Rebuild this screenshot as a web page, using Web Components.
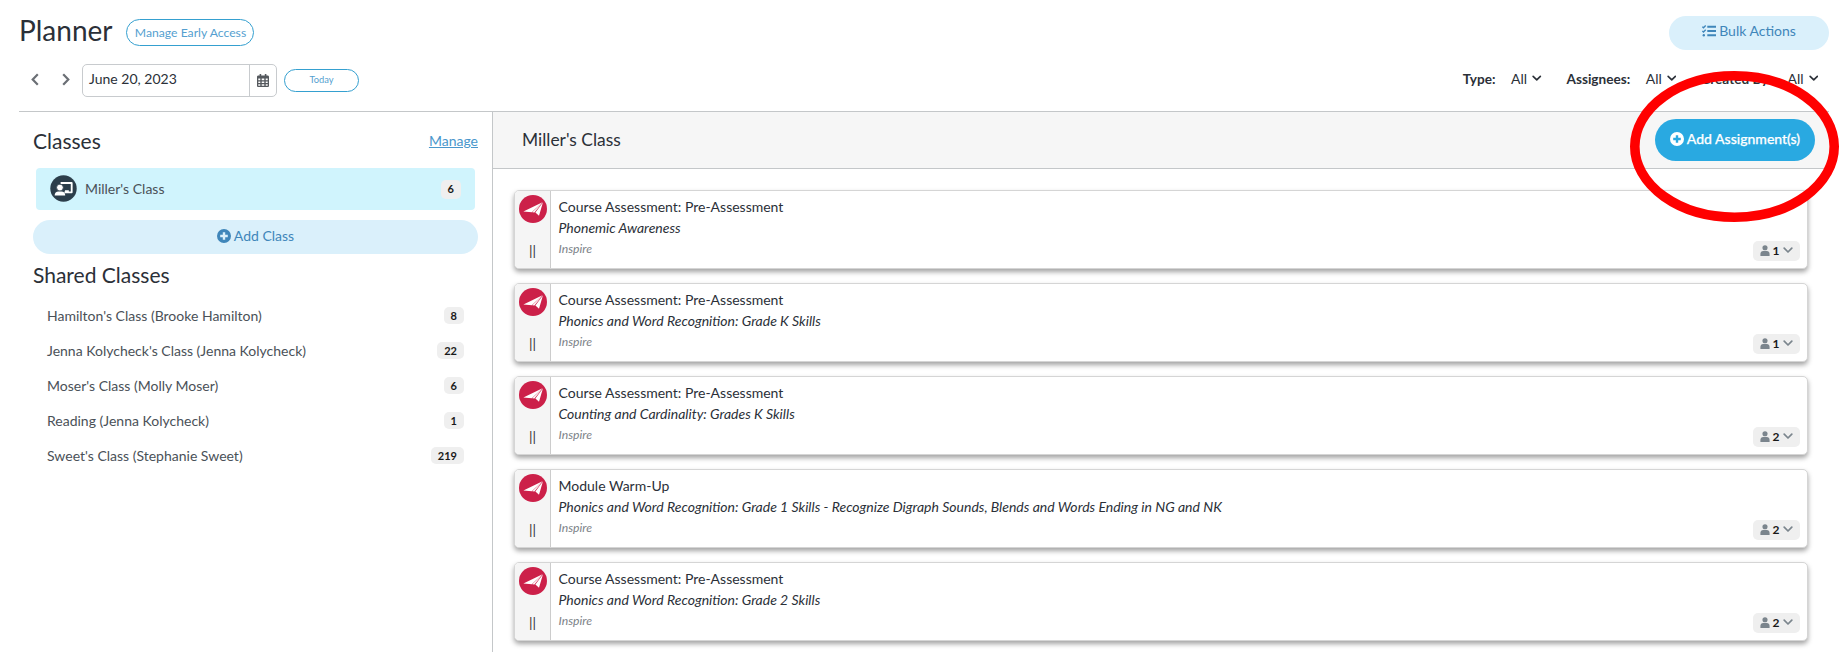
<!DOCTYPE html>
<html lang="en">
<head>
<meta charset="utf-8">
<title>Planner</title>
<style>
    html, body {
        margin: 0;
        height: 652px;
        overflow: hidden;
        background: #fff;
        font-family: Lato, "Liberation Sans", sans-serif;
        color: #2b3038;
    }
</style>
</head>
<body>
<planner-app></planner-app>

<script>
(() => {

    const BASE = `
        h1, h2, h3, div, header {
            box-sizing: border-box;
            padding: 0;
            margin: 0;
        }
    `

    // Attach an open shadow root filled from a template
    function render(host, html){
        let root = host.attachShadow({mode: 'open'})
        let template = document.createElement("template")
        template.innerHTML = html
        root.appendChild(template.content.cloneNode(true))
        return root
    }

    const ICONS = {
        left: `<svg viewBox="0 0 8 13"><path d="M6.8 1.2 1.7 6.5l5.1 5.3" fill="none" stroke="currentColor" stroke-width="2.2"/></svg>`,
        right: `<svg viewBox="0 0 8 13"><path d="M1.2 1.2l5.1 5.3-5.1 5.3" fill="none" stroke="currentColor" stroke-width="2.2"/></svg>`,
        down: `<svg viewBox="0 0 10 7"><path d="M1.2 1.2 5 5l3.8-3.8" fill="none" stroke="currentColor" stroke-width="1.7" stroke-linecap="round" stroke-linejoin="round"/></svg>`,
        plus: `<svg viewBox="0 0 14 14"><path fill="currentColor" fill-rule="evenodd" d="M7 0a7 7 0 1 0 0 14A7 7 0 0 0 7 0zM5.8 3.2h2.4v2.6h2.6v2.4H8.2v2.6H5.8V8.2H3.2V5.8h2.6z"/></svg>`,
        tasks: `<svg viewBox="0 0 14 12"><g fill="none" stroke="currentColor"><path stroke-width="1.9" d="M5.3 1.8H14M5.3 6H14M5.3 10.2H14"/><path stroke-width="1.3" d="M.4 1.7l1.1 1.1L3.7.5M.4 5.9L1.5 7l2.2-2.3"/></g><circle cx="1.8" cy="10.2" r="1.2" fill="currentColor"/></svg>`,
        calendar: `<svg viewBox="0 0 12 13"><path fill="currentColor" fill-rule="evenodd" d="M2.6 0h1.6v1.5h3.6V0h1.6v1.5h1.2c.8 0 1.4.6 1.4 1.3v8.9c0 .7-.6 1.3-1.4 1.3H1.4C.6 13 0 12.4 0 11.7V2.8c0-.7.6-1.3 1.4-1.3h1.2zM1.3 4.6v1.7h2V4.600zm3.4 0v1.7h2.6V4.600zm4 0v1.7h2V4.600zM1.3 7.4v1.7h2V7.400zm3.4 0v1.7h2.6V7.400zm4 0v1.7h2V7.400zM1.3 10.2v1.5h2v-1.5zm3.4 0v1.5h2.6v-1.5zm4 0v1.5h2v-1.5z"/></svg>`,
        user: `<svg viewBox="0 0 10 12"><circle cx="5" cy="3" r="2.8" fill="currentColor"/><path fill="currentColor" d="M0 12V9.8C0 7.8 1.3 6.5 3 6.5h4c1.7 0 3 1.3 3 3.3V12z"/></svg>`,
        teacher: `<svg viewBox="0 0 28 28"><circle cx="14" cy="14" r="13.7" fill="#2c3e4b"/><path d="M11 8.3h11.5V18H15" fill="none" stroke="#fff" stroke-width="1.9" stroke-linejoin="round"/><path d="M15.500 18v-2.200h4V18z" fill="#fff"/><circle cx="10.3" cy="13" r="3.5" fill="#fff" stroke="#2c3e4b" stroke-width=".8"/><path fill="#fff" d="M4.800 21.300c0-2.600 1.700-4.200 3.900-4.200h3.200c2.200 0 3.900 1.600 3.900 4.200z"/></svg>`,
        plane: `<svg viewBox="0 0 28 28"><circle cx="14" cy="14" r="14" fill="#cc2049"/><path fill="#fff" d="M23.500 7.300 4.400 16.600l8.400.6z"/><path fill="#fff" d="M23.700 7.300 13.200 17.300l2.200.3z"/><path fill="#fff" d="M23.900 7.500 16.400 17.500l3.600 3.300z"/></svg>`
    }

    customElements.define("pl-icon", class extends HTMLElement {
        connectedCallback(){
            render(this, `
                <style>
                    :host { display: inline-flex; flex: none; }
                    svg { display: block; width: 100%; height: 100%; }
                </style>
                ${ICONS[this.getAttribute("name")]}
            `)
        }
    })

    customElements.define("pl-button", class extends HTMLElement {
        connectedCallback(){
            render(this, `
                <style>
                    :host {
                        display: flex;
                        align-items: center;
                        justify-content: center;
                        box-sizing: border-box;
                        gap: 3px;
                        border-radius: 30px;
                        white-space: nowrap;
                        font-size: 14px;
                        line-height: 18px;
                        background: #daf0fb;
                        color: #3f86ba;
                    }
                    :host([kind=outline]) {
                        background: #fff;
                        border: 1px solid #35a0d0;
                        color: #559fd0;
                    }
                    :host([kind=primary]) {
                        background: #29a9e1;
                        color: #fff;
                        font-weight: 500;
                        -webkit-text-stroke: .25px #fff;
                    }
                </style>
                <slot></slot>
            `)
        }
    })

    customElements.define("pl-badge", class extends HTMLElement {
        connectedCallback(){
            render(this, `
                <style>
                    :host {
                        display: inline-flex;
                        align-items: center;
                        justify-content: center;
                        box-sizing: border-box;
                        height: 17px;
                        padding: 0 7px 1px;
                        border-radius: 5px;
                        background: #efefef;
                        color: #1a1a1a;
                        font-size: 11px;
                        font-weight: 700;
                    }
                </style>
                <slot></slot>
            `)
        }
    })

    customElements.define("pl-filter", class extends HTMLElement {
        connectedCallback(){
            render(this, `
                <style>
                    :host { display: flex; align-items: center; font-size: 14px; line-height: 18px; white-space: nowrap; }
                    b { font-size: 13.6px; font-weight: 700; margin-right: 15.5px; }
                    pl-icon { width: 9.5px; height: 7px; margin-left: 5px; }
                </style>
                <b>${this.getAttribute("label")}</b><slot></slot><pl-icon name="down"></pl-icon>
            `)
        }
    })

    customElements.define("pl-toolbar", class extends HTMLElement {
        connectedCallback(){
            render(this, `
                <style>
                    ${BASE}
                    :host { display: block; box-sizing: border-box; height: 111px; padding: 16px 11px 0 19px; }
                    .top, .bottom, .date, .filters { display: flex; align-items: center; }
                    .top { height: 34px; }
                    h1 { font-size: 28px; line-height: 34px; font-weight: 400; margin: -6px 14px 0 0; }
                    .early { width: 128px; height: 27px; font-size: 12.2px; margin-top: -1px; }
                    .bulk { width: 160px; height: 34px; margin-left: auto; padding-bottom: 4px; }
                    .bulk pl-icon { width: 14px; height: 12px; }
                    .bottom { height: 33px; margin-top: 14px; }
                    .arrow { width: 8px; height: 13px; margin-top: -2px; color: #6b6f75; }
                    .prev { margin-left: 12px; }
                    .next { margin: -2px 12px 0 23px; }
                    .date { width: 195px; height: 33px; border: 1px solid #c8cbce; border-radius: 5px; font-size: 14px; }
                    .date span { flex: 1; padding: 0 0 4px 6px; }
                    .date div { display: flex; align-items: center; justify-content: center; width: 27px; height: 100%; border-left: 1px solid #c8cbce; }
                    .date pl-icon { width: 12px; height: 13px; color: #55595e; }
                    .today { width: 75px; height: 23px; margin-left: 7px; font-size: 9.3px; padding-bottom: 1px; }
                    .filters { margin-left: auto; gap: 25px; padding: 0 11px 4px 0; }
                </style>
                <div class="top">
                    <h1>Planner</h1>
                    <pl-button kind="outline" class="early">Manage Early Access</pl-button>
                    <pl-button class="bulk"><pl-icon name="tasks"></pl-icon>Bulk Actions</pl-button>
                </div>
                <div class="bottom">
                    <pl-icon name="left" class="arrow prev"></pl-icon>
                    <pl-icon name="right" class="arrow next"></pl-icon>
                    <div class="date">
                        <span>June 20, 2023</span>
                        <div><pl-icon name="calendar"></pl-icon></div>
                    </div>
                    <pl-button kind="outline" class="today">Today</pl-button>
                    <div class="filters">
                        <pl-filter label="Type:">All</pl-filter>
                        <pl-filter label="Assignees:">All</pl-filter>
                        <pl-filter label="Created By:">All</pl-filter>
                    </div>
                </div>
            `)
        }
    })

    customElements.define("class-row", class extends HTMLElement {
        connectedCallback(){
            render(this, `
                <style>
                    :host {
                        display: flex;
                        align-items: center;
                        justify-content: space-between;
                        box-sizing: border-box;
                        height: 35px;
                        padding: 0 14px;
                        font-size: 14px;
                        color: #4a5158;
                    }
                    :host([active]) {
                        height: 42px;
                        margin: 0 3px 10px;
                        background: #d0f4fd;
                        border-radius: 4px;
                    }
                    :host([active]) pl-badge { height: 19px; }
                    .name { display: flex; align-items: center; gap: 8px; padding-bottom: 1px; }
                    pl-icon { width: 27px; height: 27px; }
                </style>
                <div class="name">
                    ${this.hasAttribute("active") ? `<pl-icon name="teacher"></pl-icon>` : ""}
                    <slot></slot>
                </div>
                <pl-badge>${this.getAttribute("count")}</pl-badge>
            `)
        }
    })

    customElements.define("class-sidebar", class extends HTMLElement {
        connectedCallback(){
            render(this, `
                <style>
                    ${BASE}
                    :host { display: block; box-sizing: border-box; width: 473px; padding: 16px 14px 0 14px; }
                    header { display: flex; align-items: center; justify-content: space-between; height: 26px; margin-bottom: 14px; }
                    h2 { font-size: 21px; line-height: 26px; font-weight: 400; }
                    a { font-size: 14px; color: #4a97cc; text-decoration: underline; padding-bottom: 1px; }
                    .add { height: 34px; padding-bottom: 2px; margin-bottom: 8px; }
                    .add pl-icon { width: 14px; height: 14px; }
                    .shared { margin-bottom: 10px; }
                </style>
                <header><h2>Classes</h2><a>Manage</a></header>
                <class-row active count="6">Miller's Class</class-row>
                <pl-button class="add"><pl-icon name="plus"></pl-icon>Add Class</pl-button>
                <h2 class="shared">Shared Classes</h2>
                <class-row count="8">Hamilton's Class (Brooke Hamilton)</class-row>
                <class-row count="22">Jenna Kolycheck's Class (Jenna Kolycheck)</class-row>
                <class-row count="6">Moser's Class (Molly Moser)</class-row>
                <class-row count="1">Reading (Jenna Kolycheck)</class-row>
                <class-row count="219">Sweet's Class (Stephanie Sweet)</class-row>
            `)
        }
    })

    customElements.define("assignment-card", class extends HTMLElement {
        connectedCallback(){
            render(this, `
                <style>
                    ${BASE}
                    :host {
                        display: flex;
                        box-sizing: border-box;
                        height: 79px;
                        background: #fff;
                        border: 1px solid #d5d5d5;
                        border-radius: 5px;
                        box-shadow: 0 3px 5px rgba(0, 0, 0, .36);
                        overflow: hidden;
                    }
                    .side {
                        display: flex;
                        flex-direction: column;
                        align-items: center;
                        justify-content: space-between;
                        width: 36px;
                        padding: 4px 0 9px;
                        background: #f5f5f5;
                        border-right: 1px solid #ccc;
                    }
                    .side pl-icon { width: 28px; height: 28px; }
                    .grip { font-size: 14px; line-height: 17px; color: #333; }
                    .body { flex: 1; padding: 5px 0 0 7.5px; }
                    .title, .skill { font-size: 14px; line-height: 21px; }
                    .skill, .source { font-style: italic; }
                    .source { font-size: 12.2px; line-height: 21px; color: #7c8288; }
                    pl-badge { align-self: flex-end; width: 47px; height: 20px; margin: 0 7px 7px 0; font-size: 12px; padding: 0 0 1px; gap: 3px; }
                    .user { width: 10px; height: 11px; color: #7b858d; }
                    .down { width: 10px; height: 7px; color: #7b858d; margin-left: 1px; }
                </style>
                <div class="side">
                    <pl-icon name="plane"></pl-icon>
                    <span class="grip">||</span>
                </div>
                <div class="body">
                    <div class="title">${this.getAttribute("title-text")}</div>
                    <div class="skill"><slot></slot></div>
                    <div class="source">Inspire</div>
                </div>
                <pl-badge><pl-icon class="user" name="user"></pl-icon>${this.getAttribute("count")}<pl-icon class="down" name="down"></pl-icon></pl-badge>
            `)
        }
    })

    customElements.define("assignment-list", class extends HTMLElement {
        connectedCallback(){
            render(this, `
                <style>
                    ${BASE}
                    :host { display: block; flex: 1; border-left: 1px solid #c4c7c9; }
                    header {
                        display: flex;
                        align-items: center;
                        justify-content: space-between;
                        height: 57px;
                        padding: 0 14px 0 29px;
                        background: #f6f6f6;
                        border-bottom: 1px solid #c4c7c9;
                    }
                    h3 { font-size: 17.4px; line-height: 22px; font-weight: 400; }
                    header pl-button { width: 160px; height: 42px; padding-bottom: 3px; }
                    header pl-icon { width: 14px; height: 14px; }
                    .cards { display: flex; flex-direction: column; gap: 14px; padding: 21px 21px 0 21px; }
                </style>
                <header>
                    <h3>Miller's Class</h3>
                    <pl-button kind="primary"><pl-icon name="plus"></pl-icon>Add Assignment(s)</pl-button>
                </header>
                <div class="cards">
                    <assignment-card title-text="Course Assessment: Pre-Assessment" count="1">Phonemic Awareness</assignment-card>
                    <assignment-card title-text="Course Assessment: Pre-Assessment" count="1">Phonics and Word Recognition: Grade K Skills</assignment-card>
                    <assignment-card title-text="Course Assessment: Pre-Assessment" count="2">Counting and Cardinality: Grades K Skills</assignment-card>
                    <assignment-card title-text="Module Warm-Up" count="2">Phonics and Word Recognition: Grade 1 Skills - Recognize Digraph Sounds, Blends and Words Ending in NG and NK</assignment-card>
                    <assignment-card title-text="Course Assessment: Pre-Assessment" count="2">Phonics and Word Recognition: Grade 2 Skills</assignment-card>
                </div>
            `)
        }
    })

    // Red ring drawn over the add button
    customElements.define("highlight-ring", class extends HTMLElement {
        connectedCallback(){
            render(this, `
                <style>
                    :host { display: block; position: absolute; left: 1630px; top: 71px; width: 209px; height: 151px; pointer-events: none; }
                    svg { display: block; }
                </style>
                <svg width="209" height="151"><ellipse cx="104.5" cy="75.5" rx="99.7" ry="70.7" fill="none" stroke="#f00" stroke-width="9.6"/></svg>
            `)
        }
    })

    customElements.define("planner-app", class extends HTMLElement {
        connectedCallback(){
            render(this, `
                <style>
                    :host { display: block; position: relative; width: 1840px; height: 652px; overflow: hidden; }
                    main { display: flex; height: 541px; margin: 0 11px 0 19px; border-top: 1px solid #c4c7c9; box-sizing: border-box; }
                </style>
                <pl-toolbar></pl-toolbar>
                <main>
                    <class-sidebar></class-sidebar>
                    <assignment-list></assignment-list>
                </main>
                <highlight-ring></highlight-ring>
            `)
        }
    })

})()
</script>
</body>
</html>
